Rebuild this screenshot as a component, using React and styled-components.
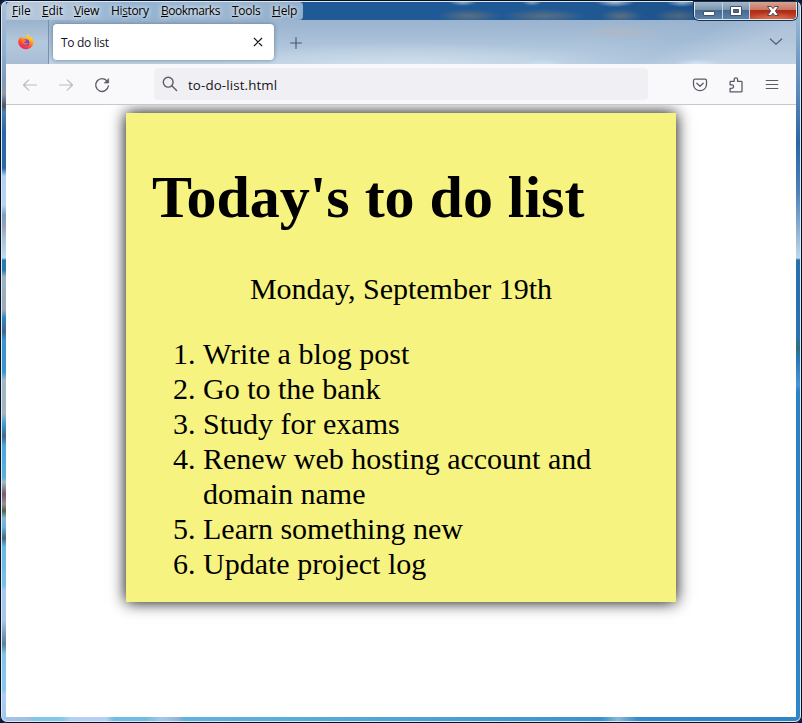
import React from "react";
import styled, { createGlobalStyle } from "styled-components";

const Global = createGlobalStyle`
  * { box-sizing: border-box; }
  body { margin: 0; background: #06173a; overflow: hidden; }
`;

const LEFT_GLASS = `linear-gradient(to bottom,
  #a9c0d8 0, #8faed0 50px, #7f9cbc 75px, #8e9aa8 92px, #4a5668 104px, #4f7eb4 110px, #2b68aa 130px, #2b68aa 166px,
  #b4cff2 174px, #b9d3f2 203px, #7e9dc4 213px, #9aa4b8 225px, #a8c4dc 238px, #c3d9ea 256px,
  #2a7ab8 258px, #2a7ab8 268px, #9bb4c2 275px, #9aaab8 308px, #2e8ac2 316px, #41688c 330px,
  #3a96cc 338px, #3a96cc 370px, #9db8c8 378px, #a3b3c0 412px, #3f9fd4 422px, #456888 434px,
  #4aa8dc 444px, #58b0de 475px, #9fb9c4 480px, #775a68 492px, #a08a98 502px, #4f6448 509px,
  #85b6d0 516px, #68b4e0 525px, #4b677f 536px, #68b8e4 545px, #78c0e8 584px, #a8c8f0 588px,
  #a9c5ec 618px, #5f8099 642px, #80c4ec 652px, #88c8ee 688px, #b0ccf4 693px, #a0c6f0 723px)`;
const RIGHT_GLASS = `linear-gradient(to bottom,
  #a9bfd6 0, #6d99c4 60px, #5a88b8 92px, #2b66a6 140px, #4b82b8 190px, #91b4d4 230px,
  #c3d8ea 256px, #2670ae 258px, #2872b2 335px, #2d7078 346px, #2a78bc 358px, #4a94d2 383px,
  #2c80c4 390px, #2f86c8 723px)`;
const BOTTOM_GLASS = `linear-gradient(to right,
  #a4c2ea 0, #a4bfe0 24px, #80c4e8 34px, #84c8ec 60px, #b4cff2 68px, #b4d0f4 104px,
  #70bce4 112px, #70bce4 144px, #a8c6ea 160px, #90b4d8 176px, #60b2de 182px, #58acdb 300px,
  #4498d2 520px, #3b91cf 600px, #88b8da 616px, #348aca 636px, #2f84c6 802px)`;

const Window = styled.div`
  width: 802px;
  height: 723px;
  padding: 2px 6px 6px;
  border-radius: 7px;
  overflow: hidden;
  background:
    ${LEFT_GLASS} 2px 2px / 4px 719px no-repeat,
    ${RIGHT_GLASS} 796px 2px / 4px 719px no-repeat,
    ${BOTTOM_GLASS} 2px 717px / 798px 4px no-repeat,
    #1f5c99;
  box-shadow: inset 0 0 0 1px #061020, inset 0 0 0 2px #dce9f4;
`;

const TitleBar = styled.header`
  height: 18px;
  display: flex;
  justify-content: space-between;
  background:
    radial-gradient(ellipse 14px 4px at 457px 0, #91adc6, transparent),
    radial-gradient(ellipse 10px 4px at 526px 0, #87a3bf, transparent),
    radial-gradient(ellipse 20px 5px at 609px 0, #a6bfd7, transparent),
    radial-gradient(ellipse 16px 5px at 676px 0, #9ab6d0, transparent),
    radial-gradient(ellipse 32px 7px at 463px 14px, #5b6f82, transparent),
    radial-gradient(ellipse 42px 7px at 538px 14px, #5b6f82, transparent),
    radial-gradient(ellipse 22px 7px at 615px 14px, #5b6f82, transparent),
    radial-gradient(ellipse 24px 7px at 672px 14px, #50697f, transparent),
    linear-gradient(to right, #205a96 70%, #1c4d84);
`;

const MenuBar = styled.nav`
  display: flex;
  width: 297px;
  height: 18px;
  padding-left: 6px;
  border-radius: 4px 4px 4px 0;
  background: linear-gradient(100deg, #b7c8da 0, #b0c4d9 20%, #91b2d2 40%, #9db7d0 70%, #91aecb 100%);
  font: 12px/18px "Open Sans", sans-serif;
  color: #000;
`;

const MenuItem = styled.span`
  width: ${(p) => p.$w}px;
  letter-spacing: ${(p) => p.$ls}px;
  white-space: nowrap;
  text-shadow: 0 0 4px rgba(255, 255, 255, 0.9), 0 0 7px rgba(255, 255, 255, 0.7);
  u { text-underline-offset: 1px; text-decoration-thickness: 1px; text-decoration-skip-ink: none; }
`;

const Controls = styled.div`
  display: flex;
  width: 103px;
  height: 18px;
  margin-right: -1px;
  border: 1px solid #dce9f4;
  border-top: 0;
  border-radius: 0 0 5px 5px;
  overflow: hidden;
  box-shadow: 0 0 0 1px #1c3450;
`;

const Control = styled.button`
  display: grid;
  place-items: center;
  width: ${(p) => p.$w}px;
  padding: 0;
  border: 0;
  border-right: ${(p) => (p.$close ? "0" : "1px solid #c3d3e1")};
  background: ${(p) =>
    p.$close
      ? "radial-gradient(ellipse 26px 7px at 50% 100%, #dc7250, transparent), linear-gradient(#d9a291 0, #c87562 47%, #a92c18 50%, #bd3720 75%, #c74f34)"
      : "linear-gradient(#a5b9cb 0, #7793ad 47%, #456b90 50%, #5b82a8 100%)"};
  svg { display: block; }
`;

const TabStrip = styled.div`
  display: flex;
  height: 44px;
  background:
    radial-gradient(ellipse 42px 8px at 616px 12px, rgba(176, 184, 192, 0.75), rgba(176, 184, 192, 0)),
    radial-gradient(ellipse 22px 5px at 537px 44px, #c9e0f0, rgba(201, 224, 240, 0)),
    radial-gradient(ellipse 24px 5px at 692px 44px, #d4e4f4, rgba(212, 228, 244, 0)),
    radial-gradient(ellipse 200px 22px at 400px 44px, rgba(214, 228, 238, 0.7), rgba(214, 228, 238, 0)),
    linear-gradient(155deg, rgba(195, 210, 226, 0) 70%, rgba(150, 178, 208, 0.35) 82%, rgba(195, 210, 226, 0.4) 90%),
    linear-gradient(#9ab3cf, #aac1d9 50%, #bfd2e4);
`;

const PinnedTab = styled.div`
  width: 43px;
  padding: 14px 0 0 12px;
  border-right: 1px solid #7b91aa;
  background: linear-gradient(#9ab2cd, #b4c8dd 50%, #a8bdd5);
  svg { display: block; }
`;

const ActiveTab = styled.div`
  display: flex;
  justify-content: space-between;
  align-items: center;
  width: 221px;
  height: 36px;
  margin: 4px 0 0 4px;
  padding: 0 10px 0 8px;
  border-radius: 4px;
  background: #fff;
  box-shadow: 0 0 4px rgba(60, 80, 110, 0.6);
  font: 12px/36px "Open Sans", sans-serif;
  letter-spacing: -0.3px;
  color: #15141a;
  span { padding-top: 2px; }
`;

const NewTab = styled.div`
  margin: 16px 0 0 15px;
  svg { display: block; }
`;

const TabListButton = styled.div`
  margin: 15px 13px 0 auto;
  svg { display: block; }
`;

const Toolbar = styled.div`
  display: flex;
  align-items: center;
  height: 41px;
  padding: 1px 16px 0;
  background: #f9f9fb;
  border-bottom: 1px solid #c8c8cb;
  svg { display: block; }
`;

const IconGroup = styled.div`
  display: flex;
  gap: 20px;
  margin-left: ${(p) => (p.$end ? "auto" : "0")};
`;

const AddressBar = styled.div`
  display: flex;
  align-items: center;
  gap: 10px;
  width: 494px;
  height: 32px;
  margin: -1px 0 0 44px;
  padding-left: 8px;
  border-radius: 4px;
  background: #f0f0f4;
  font: 13.33px/32px "Open Sans", sans-serif;
  letter-spacing: 0.12px;
  color: #15141a;
  span { padding-top: 2px; }
`;

const Page = styled.main`
  height: 612px;
  padding: 8px 0 0 120px;
  background: #fff;
  overflow: hidden;
`;

const Note = styled.article`
  width: 550px;
  height: 489px;
  padding: 50px 27px 0;
  background: #f6f380;
  box-shadow: 0 0 15px #000;
  font: 30px/35px "Liberation Serif", serif;
  color: #000;
`;

const Title = styled.h1`
  margin: 0 0 0 -1px;
  font-size: 60px;
  line-height: 69px;
  font-weight: bold;
  letter-spacing: -0.03px;
  white-space: nowrap;
`;

const DateLine = styled.p`
  margin: 39px 0 30px;
  text-align: center;
`;

const Tasks = styled.ol`
  margin: 0;
  padding-left: 50px;
`;

const tasks = [
  "Write a blog post",
  "Go to the bank",
  "Study for exams",
  "Renew web hosting account and domain name",
  "Learn something new",
  "Update project log",
];

const menus = [
  ["", "F", "ile", 30, -0.1],
  ["", "E", "dit", 32, -0.1],
  ["", "V", "iew", 37, -0.3],
  ["Hi", "s", "tory", 50, -0.35],
  ["", "B", "ookmarks", 71, -0.48],
  ["", "T", "ools", 40, -0.3],
  ["", "H", "elp", 28, -0.2],
];

const Icon = ({ children, color = "#5b5b66", size = 16, width = 1.2 }) => (
  <svg width={size} height={size} viewBox="0 0 16 16" fill="none" stroke={color} strokeWidth={width} strokeLinecap="round" strokeLinejoin="round">
    {children}
  </svg>
);

const Firefox = () => (
  <svg width="16" height="16" viewBox="0 0 16 16">
    <defs>
      <linearGradient id="flame" x1="0.8" y1="0" x2="0.25" y2="1">
        <stop offset="0" stopColor="#fff23e" />
        <stop offset="0.35" stopColor="#ffad22" />
        <stop offset="0.65" stopColor="#ff5132" />
        <stop offset="1" stopColor="#ee1765" />
      </linearGradient>
    </defs>
    <path d="M10 0c.3 1.7 1.4 2.6 2.4 3.6l.3-1.1c1.9 1.3 3 3.6 3 6A7.8 7.6 0 0 1 .2 8.5C.1 6.7.8 4.5 2 3l.4 1.2c.8-.7 1.2-1.7 1.5-2 .1.8.5 1.4 1 1.7 1-.4 2.2-.4 3 .1C8 2.4 8.7 1 10 0z" fill="url(#flame)" />
    <circle cx="8" cy="8.5" r="3.3" fill="#7542e5" />
    <path d="M3.9 6c1.2-.8 2.6-.6 3.5.1l1.1.3c-.1.9-1.5 1-2 1.4-.4.5 0 1.6 1.3 1.5 1-.1 1.4-.7 2.3-.3-.6 1.4-2.2 2-3.8 1.5C4.5 9.9 3.7 8 3.9 6z" fill="#ff7a22" />
  </svg>
);

export default function App() {
  return (
    <>
      <Global />
      <Window>
        <TitleBar>
          <MenuBar>
            {menus.map(([before, key, after, w, ls]) => (
              <MenuItem key={key + after} $w={w} $ls={ls}>{before}<u>{key}</u>{after}</MenuItem>
            ))}
          </MenuBar>
          <Controls>
            <Control $w={28} aria-label="Minimize">
              <svg width="14" height="14"><rect x="1.5" y="7.5" width="11" height="4" rx=".5" fill="#fff" stroke="#475366" /></svg>
            </Control>
            <Control $w={27} aria-label="Maximize">
              <svg width="14" height="14"><path d="M1.5 2.5h11v9h-11zM4.5 5.5v3h5v-3z" fill="#fff" fillRule="evenodd" stroke="#475366" /></svg>
            </Control>
            <Control $w={46} $close aria-label="Close">
              <svg width="14" height="14"><path d="M1.5 2.5h3.7L7 4.7l1.8-2.2h3.7L9.4 7l3.1 4.5H8.8L7 9.3l-1.8 2.2H1.5L4.6 7z" fill="#fff" stroke="#594551" /></svg>
            </Control>
          </Controls>
        </TitleBar>
        <TabStrip>
          <PinnedTab><Firefox /></PinnedTab>
          <ActiveTab>
            <span>To do list</span>
            <Icon size={12} color="#15141a" width={1.45}><path d="M3 3l10 10M13 3L3 13" /></Icon>
          </ActiveTab>
          <NewTab><Icon size={14} color="#4b566b" width={1.3}><path d="M8 1.8v12.4M1.8 8h12.4" /></Icon></NewTab>
          <TabListButton><Icon size={14} color="#5a6475" width={1.5}><path d="M1.5 4.5L8 10.5l6.5-6" /></Icon></TabListButton>
        </TabStrip>
        <Toolbar>
          <IconGroup>
            <Icon color="#bbbbc0"><path d="M14.3 8H1.5M6.7 2.8L1.5 8l5.2 5.2" /></Icon>
            <Icon color="#bbbbc0"><path d="M1.7 8h12.8M9.3 2.8L14.5 8l-5.2 5.2" /></Icon>
            <Icon width={1.4}><path d="M13.3 4.3A6.4 6.4 0 1 0 14.4 9" /><path d="M14.6 2v4h-4z" fill="#5b5b66" strokeWidth=".7" /></Icon>
          </IconGroup>
          <AddressBar>
            <Icon width={1.4}><circle cx="6.2" cy="6.2" r="4.9" /><path d="M9.8 9.8l4.8 4.8" /></Icon>
            <span>to-do-list.html</span>
          </AddressBar>
          <IconGroup $end>
            <Icon width={1.3}><path d="M3 2.2h10c.9 0 1.5.6 1.5 1.5V7.5a6.5 6.2 0 0 1-13 0V3.7c0-.9.6-1.5 1.5-1.5zM4.8 6.3L8 9.3l3.2-3" /></Icon>
            <Icon width={1.3}><path d="M2.1 14.9V11.4h1.7a1.8 1.8 0 0 0 0-3.6H2.1V5.1c0-.4.3-.7.7-.7h3.4V2.5a1.7 1.7 0 0 1 3.4 0v1.9h3.7c.4 0 .7.3.7.7v9.1c0 .4-.3.7-.7.7z" /></Icon>
            <Icon width={1.2}><path d="M2.2 3.5h11.6M2.2 7.5h11.6M2.2 11.5h11.6" /></Icon>
          </IconGroup>
        </Toolbar>
        <Page>
          <Note>
            <Title>Today's to do list</Title>
            <DateLine>Monday, September 19th</DateLine>
            <Tasks>{tasks.map((task) => <li key={task}>{task}</li>)}</Tasks>
          </Note>
        </Page>
      </Window>
    </>
  );
}
